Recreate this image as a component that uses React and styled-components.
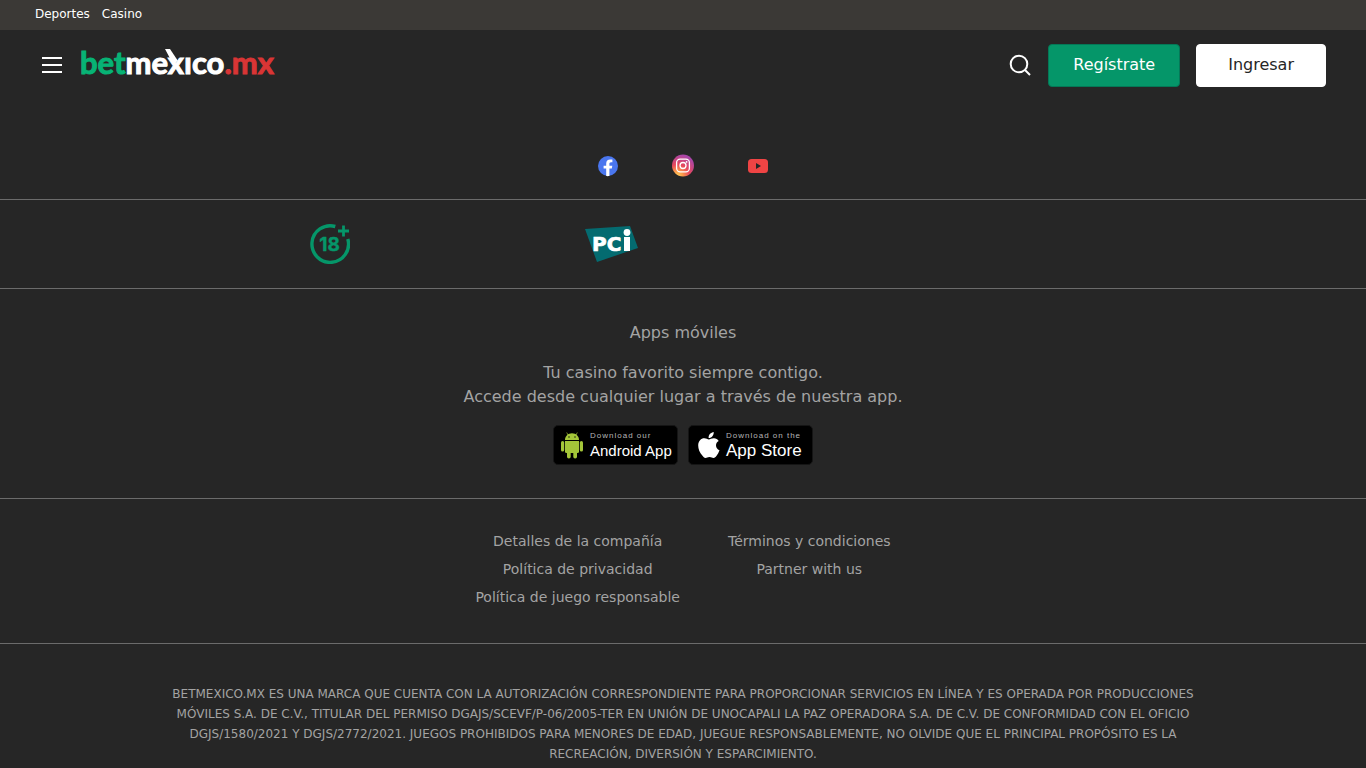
import React from "react";
import styled, { createGlobalStyle } from "styled-components";

const GlobalStyle = createGlobalStyle`
	* {
		box-sizing: border-box;
	}
	body {
		margin: 0;
		background: #262626;
		color: #a3a3a3;
		font-family: "DejaVu Sans", sans-serif;
		font-size: 16px;
		line-height: 24px;
	}
	a {
		color: inherit;
		text-decoration: none;
	}
	button {
		font-family: inherit;
		cursor: pointer;
	}
	svg {
		display: block;
	}
`;

const TopBar = styled.nav`
	display: flex;
	gap: 12px;
	height: 30px;
	padding: 4px 35px 0;
	background: #3b3936;
	color: #fff;
	font-size: 12px;
	line-height: 20px;
`;

const HeaderBar = styled.header`
	display: flex;
	align-items: center;
	justify-content: space-between;
	height: 70px;
	padding: 0 40px;
`;

const HeaderGroup = styled.div`
	display: flex;
	align-items: center;
	gap: ${(props) => props.$gap || "16px"};
`;

const IconButton = styled.button`
	width: 24px;
	height: 24px;
	padding: 0;
	border: 0;
	background: none;
	color: #fff;
`;

const Button = styled.button`
	height: 43px;
	padding: 0 ${(props) => (props.$primary ? "24px" : "31px")};
	border: 1px solid ${(props) => (props.$primary ? "#047857" : "#fff")};
	border-radius: 4px;
	background: ${(props) => (props.$primary ? "#059669" : "#fff")};
	color: ${(props) => (props.$primary ? "#fff" : "#262626")};
	font-size: 16px;
	line-height: 24px;
`;

const LogoText = styled.text`
	font-family: Lato, sans-serif;
	font-size: 31px;
	font-weight: 700;
`;

const Section = styled.section`
	padding: ${(props) => props.$pad};
	border-bottom: 1px solid #6b6b6b;
`;

const SocialList = styled.div`
	display: flex;
	justify-content: center;
	gap: 51px;
`;

const BadgeGrid = styled.div`
	display: grid;
	grid-template-columns: repeat(auto-fill, 282px);
	max-width: 988px;
	margin: 0 auto;
	align-items: center;
	justify-items: center;
`;

const AppsTitle = styled.h2`
	margin: 0 0 16px;
	font-size: 16px;
	font-weight: 400;
	text-align: center;
`;

const AppsText = styled.p`
	margin: 0 0 16px;
	text-align: center;
`;

const StoreList = styled.div`
	display: flex;
	justify-content: center;
	gap: 10px;
`;

const StoreLink = styled.a`
	display: flex;
	align-items: center;
	gap: 6px;
	width: 125px;
	height: 40px;
	padding-left: ${(props) => props.$inset};
	border: 1px solid #151515;
	border-radius: 5px;
	background: #000;
	color: #fff;
	font-family: "Liberation Sans", sans-serif;
	white-space: nowrap;
`;

const StoreLabel = styled.span`
	display: flex;
	flex-direction: column;
	padding-top: 2px;
`;

const StoreSmall = styled.span`
	color: #b5b5b5;
	font-size: 8px;
	line-height: 10px;
	letter-spacing: 1px;
`;

const StoreName = styled.span`
	font-size: ${(props) => props.$size};
	line-height: 20px;
`;

const LinkColumns = styled.div`
	display: flex;
	justify-content: center;
	gap: 48px;
	font-size: 14px;
	line-height: 20px;
`;

const LinkColumn = styled.div`
	display: flex;
	flex-direction: column;
	align-items: center;
	gap: 8px;
`;

const Legal = styled.p`
	max-width: 1036px;
	margin: 0 auto;
	padding: 40px 0 4px;
	font-size: 12px;
	line-height: 20px;
	text-align: center;
`;

const MenuIcon = () => (
	<svg width="24" height="24" viewBox="0 0 24 24" stroke="currentColor" strokeWidth="2">
		<path d="M2 5h20M2 12h20M2 19h20" />
	</svg>
);

const SearchIcon = () => (
	<svg width="24" height="24" viewBox="0 0 24 24" fill="none" stroke="currentColor" strokeWidth="2">
		<circle cx="11" cy="11" r="8.300" />
		<path d="M17 17l5 5" />
	</svg>
);

const Logo = () => (
	<svg width="208" height="48" viewBox="0 0 208 48">
		<LogoText x="2" y="33" fill="#07b375" stroke="#07b375" strokeWidth="1">
			bet
			<tspan fill="#fff" stroke="#fff">mexıco</tspan>
			<tspan fill="#d93535" stroke="#d93535">.mx</tspan>
		</LogoText>
		<path d="M87 8h5l8 12-5 3z" fill="#fff" />
	</svg>
);

const FacebookIcon = () => (
	<svg width="24" height="24" viewBox="0 0 24 24">
		<circle cx="12" cy="12" r="10" fill="#4a76ee" />
		<path
			d="M10.200 22v-7.400H7.600v-2.900h2.600V9.400c0-2.600 1.500-4 3.900-4 .9 0 1.800.1 2.300.2v2.600h-1.300c-1.300 0-1.700.8-1.700 1.600v1.900h2.900l-.5 2.900h-2.400V22c-1 .2-2.500.2-3.200 0z"
			fill="#fff"
		/>
	</svg>
);

const InstagramIcon = () => (
	<svg width="24" height="24" viewBox="0 0 24 24">
		<defs>
			<radialGradient id="insta" cx="0.25" cy="1" r="1">
				<stop offset="0" stopColor="#ffd45a" />
				<stop offset="0.25" stopColor="#fb9a4b" />
				<stop offset="0.55" stopColor="#e8485c" />
				<stop offset="1" stopColor="#a845a8" />
			</radialGradient>
		</defs>
		<circle cx="12" cy="11.500" r="11" fill="url(#insta)" />
		<g fill="none" stroke="#fff" strokeWidth="1.300">
			<rect x="5.600" y="5.200" width="12.800" height="12.600" rx="3.500" />
			<circle cx="12" cy="11.500" r="3" />
		</g>
		<circle cx="15.600" cy="7.900" r="0.900" fill="#fff" />
	</svg>
);

const YoutubeIcon = () => (
	<svg width="24" height="24" viewBox="0 0 24 24">
		<rect x="2" y="5" width="20" height="14" rx="3.500" fill="#ef4444" />
		<path d="M10 9l5 3-5 3z" fill="#262626" />
	</svg>
);

const AgeIcon = () => (
	<svg width="40" height="40" viewBox="0 0 40 40" fill="none" stroke="#059669">
		<path d="M25.300 2.500A18.300 18.300 0 1 0 37.800 15" strokeWidth="3.400" />
		<path d="M33.500 1.500v11M28 7h11" strokeWidth="2.800" />
		<text
			x="19.500"
			y="27"
			textAnchor="middle"
			fontFamily="Inter, sans-serif"
			fontSize="19"
			fontWeight="700"
			fill="#059669"
			stroke="#059669"
			strokeWidth="0.400"
		>
			18
		</text>
	</svg>
);

const PciIcon = () => (
	<svg width="54" height="38" viewBox="0 0 54 38">
		<path d="M0 4L45 1l8 22-41 14z" fill="#046b70" />
		<text
			x="7"
			y="26"
			fontFamily="DejaVu Sans, sans-serif"
			fontSize="20"
			fontWeight="700"
			fill="#fff"
			stroke="#fff"
			strokeWidth="0.700"
		>
			PC
		</text>
		<path d="M39 12h6v14h-6z" fill="#fff" />
		<circle cx="42" cy="7.500" r="3.400" fill="#fff" />
	</svg>
);

const AndroidIcon = () => (
	<svg width="24" height="28" viewBox="0 0 24 28">
		<g fill="#a4c639">
			<path d="M5 9C5 5 8 2.200 12 2.200S19 5 19 9z" />
			<path d="M5 10h14v10.500a1.500 1.500 0 0 1-1.500 1.500h-11A1.500 1.500 0 0 1 5 20.500z" />
			<rect x="1" y="10" width="3.200" height="10.500" rx="1.600" />
			<rect x="19.800" y="10" width="3.200" height="10.500" rx="1.600" />
			<rect x="7" y="18" width="3.700" height="9.500" rx="1.800" />
			<rect x="13.300" y="18" width="3.700" height="9.500" rx="1.800" />
		</g>
		<path d="M8 4L6.700 1.500M16 4l1.300-2.500" stroke="#a4c639" strokeWidth="0.700" />
		<circle cx="9" cy="6" r="0.700" fill="#000" />
		<circle cx="15" cy="6" r="0.700" fill="#000" />
	</svg>
);

const AppleIcon = () => (
	<svg width="22" height="26" viewBox="0 0 22 26" fill="#fff">
		<path d="M15.700 0c.2 1.500-.4 3-1.300 4.200-.9 1.100-2.300 2-3.800 1.900-.2-1.500.5-3 1.300-4C12.900 1 14.500.1 15.700 0z" />
		<path d="M20.700 8.900c-1.700 1.100-2.700 2.400-2.700 4.400 0 2.300 1.300 4.200 3.500 5-.7 2.100-1.700 4-3.100 5.700-.8 1-1.600 1.900-2.900 1.900-1.400 0-2-.9-4-.9s-2.600.9-4 .9c-1.300 0-2.200-1-3-2.100C1.500 20.500.2 16.500.2 13.400c0-4.400 2.900-7.100 6.100-7.100 1.800 0 3.400 1.200 4.600 1.200 1.100 0 2.900-1.300 5.100-1.200 1.900 0 3.600 1 4.700 2.600z" />
	</svg>
);

const topLinks = ["Deportes", "Casino"];

const socials = [
	{ name: "Facebook", Icon: FacebookIcon },
	{ name: "Instagram", Icon: InstagramIcon },
	{ name: "YouTube", Icon: YoutubeIcon },
];

const footerLinks = [
	["Detalles de la compañía", "Política de privacidad", "Política de juego responsable"],
	["Términos y condiciones", "Partner with us"],
];

const Header = () => (
	<HeaderBar>
		<HeaderGroup $gap="14px">
			<IconButton aria-label="Menú">
				<MenuIcon />
			</IconButton>
			<a href="#inicio" aria-label="betmexico.mx">
				<Logo />
			</a>
		</HeaderGroup>
		<HeaderGroup>
			<IconButton aria-label="Buscar">
				<SearchIcon />
			</IconButton>
			<Button $primary>Regístrate</Button>
			<Button>Ingresar</Button>
		</HeaderGroup>
	</HeaderBar>
);

const Footer = () => (
	<footer>
		<Section $pad="54px 0 21px">
			<SocialList>
				{socials.map(({ name, Icon }) => (
					<a key={name} href={"#" + name} aria-label={name}>
						<Icon />
					</a>
				))}
			</SocialList>
		</Section>
		<Section $pad="24px 0">
			<BadgeGrid>
				<AgeIcon />
				<PciIcon />
			</BadgeGrid>
		</Section>
		<Section $pad="32px 0 33px">
			<AppsTitle>Apps móviles</AppsTitle>
			<AppsText>
				Tu casino favorito siempre contigo.
				<br />
				Accede desde cualquier lugar a través de nuestra app.
			</AppsText>
			<StoreList>
				<StoreLink href="#android" $inset="6px">
					<AndroidIcon />
					<StoreLabel>
						<StoreSmall>Download our</StoreSmall>
						<StoreName $size="15px">Android App</StoreName>
					</StoreLabel>
				</StoreLink>
				<StoreLink href="#ios" $inset="9px">
					<AppleIcon />
					<StoreLabel>
						<StoreSmall>Download on the</StoreSmall>
						<StoreName $size="17px">App Store</StoreName>
					</StoreLabel>
				</StoreLink>
			</StoreList>
		</Section>
		<Section $pad="32px 0 36px">
			<LinkColumns>
				{footerLinks.map((column) => (
					<LinkColumn key={column[0]}>
						{column.map((label) => (
							<a key={label} href="#info">
								{label}
							</a>
						))}
					</LinkColumn>
				))}
			</LinkColumns>
		</Section>
		<Legal>
			BETMEXICO.MX ES UNA MARCA QUE CUENTA CON LA AUTORIZACIÓN CORRESPONDIENTE PARA
			PROPORCIONAR SERVICIOS EN LÍNEA Y ES OPERADA POR PRODUCCIONES MÓVILES S.A. DE C.V.,
			TITULAR DEL PERMISO DGAJS/SCEVF/P-06/2005-TER EN UNIÓN DE UNOCAPALI LA PAZ OPERADORA
			S.A. DE C.V. DE CONFORMIDAD CON EL OFICIO DGJS/1580/2021 Y DGJS/2772/2021. JUEGOS
			PROHIBIDOS PARA MENORES DE EDAD, JUEGUE RESPONSABLEMENTE, NO OLVIDE QUE EL PRINCIPAL
			PROPÓSITO ES LA RECREACIÓN, DIVERSIÓN Y ESPARCIMIENTO.
		</Legal>
	</footer>
);

const App = () => (
	<>
		<GlobalStyle />
		<TopBar>
			{topLinks.map((label) => (
				<a key={label} href={"#" + label}>
					{label}
				</a>
			))}
		</TopBar>
		<Header />
		<Footer />
	</>
);

export default App;
